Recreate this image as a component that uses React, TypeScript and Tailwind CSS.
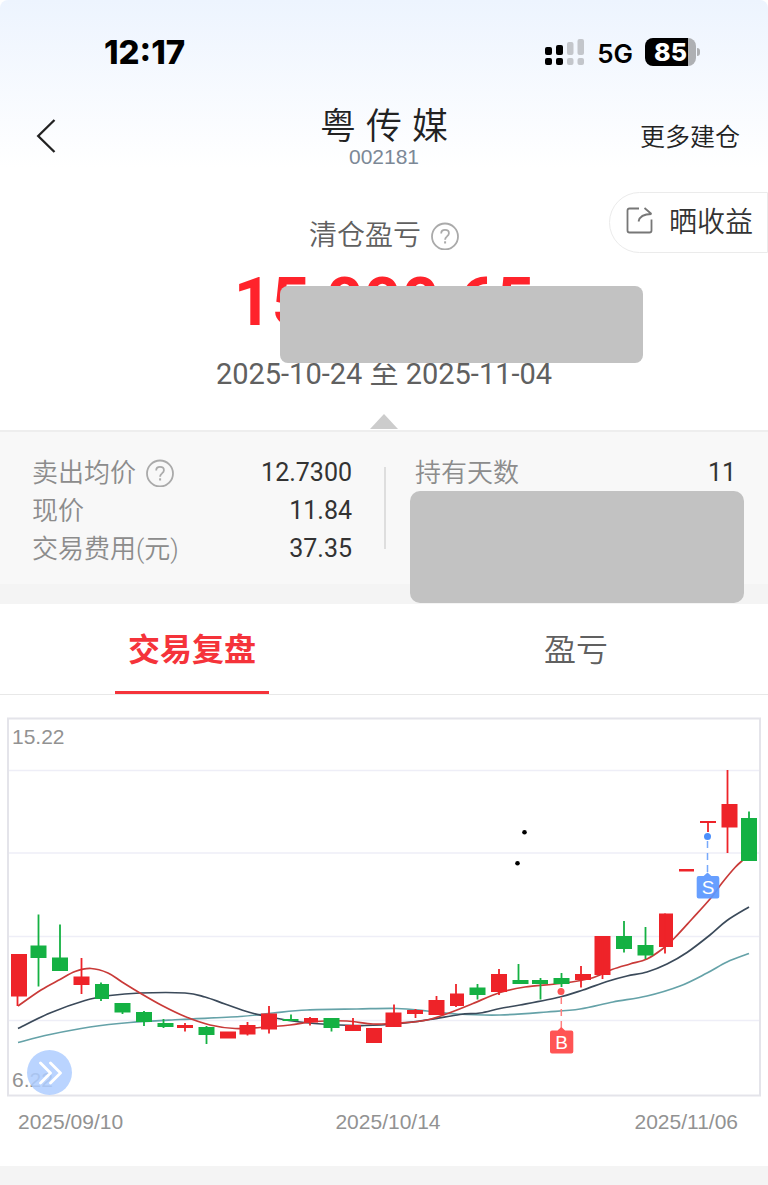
import { useState } from "react";

type Candle = {
  x: number;
  w?: number;
  top: number;
  bottom: number;
  wick?: [number, number, number];
  up: boolean;
};

const RED = "#ee2329";
const GREEN = "#14b143";

const candles: Candle[] = [
  { x: 11, top: 954, bottom: 996.5, wick: [17.5, 954, 1006], up: true },
  { x: 30.5, top: 945.5, bottom: 958, wick: [38.5, 914.5, 986.5], up: false },
  { x: 52, top: 957.5, bottom: 971, wick: [60, 924.5, 971], up: false },
  { x: 73.5, top: 976.5, bottom: 985, wick: [81.5, 958, 994], up: true },
  { x: 95, w: 14, top: 984, bottom: 999, wick: [101, 982.5, 1001], up: false },
  { x: 114.5, top: 1003, bottom: 1012.5, wick: [122.5, 1003, 1014], up: false },
  { x: 136, top: 1012, bottom: 1022, wick: [144, 1011, 1026], up: false },
  { x: 157.5, top: 1023, bottom: 1027, wick: [163.5, 1019, 1028], up: false },
  { x: 177, top: 1025, bottom: 1028, wick: [185, 1023, 1031.5], up: true },
  { x: 198.5, top: 1027, bottom: 1035, wick: [206.5, 1026, 1044], up: false },
  { x: 220, top: 1031.5, bottom: 1038.5, up: true },
  { x: 239.5, top: 1025, bottom: 1034.5, wick: [247.5, 1022, 1035.5], up: true },
  { x: 261, top: 1013.5, bottom: 1029.5, wick: [269, 1006, 1033.5], up: true },
  { x: 282.5, top: 1019, bottom: 1021, wick: [291, 1014.5, 1021], up: false },
  { x: 304, w: 14, top: 1018, bottom: 1022.5, wick: [310, 1017, 1025.5], up: true },
  { x: 323.5, top: 1018, bottom: 1028, wick: [331.5, 1018, 1031.5], up: false },
  { x: 345, top: 1025, bottom: 1031, wick: [353, 1018, 1031], up: true },
  { x: 366, top: 1028, bottom: 1043, up: true },
  { x: 385.5, top: 1012.5, bottom: 1027, wick: [394, 1004.5, 1027], up: true },
  { x: 407, top: 1010, bottom: 1014, wick: [415.5, 1009, 1018], up: true },
  { x: 428.5, top: 1000, bottom: 1015, wick: [436.5, 996, 1015], up: true },
  { x: 450, w: 14, top: 993.5, bottom: 1006, wick: [456, 984, 1007], up: true },
  { x: 469.5, top: 987.5, bottom: 995, wick: [477.5, 984, 999.5], up: false },
  { x: 491, top: 974, bottom: 992, wick: [499, 969, 995], up: true },
  { x: 512.5, top: 980, bottom: 984, wick: [518.5, 964, 984], up: false },
  { x: 532, top: 980, bottom: 984, wick: [540.5, 978, 999.5], up: false },
  { x: 553.5, top: 978, bottom: 984, wick: [561.5, 973, 987], up: false },
  { x: 575, top: 974, bottom: 980, wick: [581, 966, 987.5], up: true },
  { x: 594.5, top: 936, bottom: 975, wick: [602.5, 936, 979], up: true },
  { x: 616, top: 936, bottom: 949, wick: [624, 921, 952.5], up: false },
  { x: 637.5, top: 945, bottom: 955.5, wick: [645.5, 927, 959], up: false },
  { x: 659, w: 14, top: 913.5, bottom: 947, wick: [665, 913.5, 953.5], up: true },
  { x: 679, w: 15, top: 869, bottom: 871.5, up: true },
  { x: 700, top: 821, bottom: 823, wick: [708, 821, 832], up: true },
  { x: 721.5, top: 804, bottom: 827.5, wick: [727.5, 770, 853], up: true },
  { x: 741, top: 818, bottom: 861, wick: [749, 811.5, 861], up: false },
];

const ma5 = [
  [18, 1006], [41, 990], [60, 979.5], [75, 971.5], [91, 968.5], [108, 973],
  [122, 982], [140, 993], [162, 1005.5], [185, 1016.5], [210, 1025], [235, 1028.5],
  [260, 1027.5], [290, 1025], [315, 1021.5], [347, 1021], [373, 1024], [400, 1023],
  [427, 1020], [453, 1011.5], [473, 1003.5], [500, 992.5], [525, 987], [560, 983.5],
  [590, 978.5], [612, 969.5], [630, 964], [647, 959], [663, 948.5], [675, 937.5],
  [692, 919], [710, 899], [722, 883], [735, 867.5], [743, 860],
];
const ma10 = [
  [18, 1028.5], [50, 1013], [85, 1000.5], [110, 995.5], [140, 993], [185, 993],
  [205, 997], [225, 1004], [250, 1012.5], [275, 1018], [300, 1022], [330, 1024.5],
  [365, 1025.5], [400, 1023.5], [430, 1019.5], [460, 1014.5], [480, 1013], [500, 1008.5],
  [520, 1005], [560, 997], [583, 990], [607, 981.5], [627, 976], [647, 972],
  [667, 964], [687, 952.5], [710, 935], [727, 920.5], [749, 907],
];
const ma20 = [
  [18, 1042.5], [50, 1034.5], [90, 1027], [130, 1022.5], [180, 1019.5], [240, 1016.5],
  [273, 1013], [307, 1010], [357, 1009], [397, 1008.5], [427, 1011], [457, 1014],
  [500, 1015], [547, 1012], [580, 1009], [613, 1002], [647, 996], [680, 986],
  [707, 973], [727, 962], [749, 953.5],
];

// smooth curve through every point
function curve(p: number[][]) {
  let d = `M${p[0][0]} ${p[0][1]}`;
  for (let i = 0; i < p.length - 1; i++) {
    const a = p[i - 1] || p[i];
    const b = p[i];
    const c = p[i + 1];
    const e = p[i + 2] || c;
    d += `C${b[0] + (c[0] - a[0]) / 6} ${b[1] + (c[1] - a[1]) / 6} ${
      c[0] - (e[0] - b[0]) / 6
    } ${c[1] - (e[1] - b[1]) / 6} ${c[0]} ${c[1]}`;
  }
  return d;
}

const HelpButton = ({ label }: { label: string }) => (
  <button type="button" aria-label={label} className="shrink-0">
    <svg viewBox="0 0 28 28" className="size-7 text-[#aaaaaa]" fill="none" stroke="currentColor">
      <circle cx="14" cy="14.500" r="13" strokeWidth="1.8" />
      <path
        d="M10.200 11.400C10.200 9 11.800 7.900 14 7.900s3.900 1.300 3.900 3.300c0 1.600-1 2.400-2.100 3.400-1.100.9-1.700 1.500-1.700 3.200"
        strokeWidth="1.8"
      />
      <path d="M14.100 19.300v2.200" strokeWidth="2" />
    </svg>
  </button>
);

const StatusBar = () => (
  <div className="flex h-26 items-center justify-between pr-17 pl-26 text-black">
    <span className="pt-0.5 font-[Inter] text-[33px] font-extrabold">12:17</span>
    <div className="flex items-center gap-3">
      <svg viewBox="0 0 40 28" className="h-7 w-10">
        <g fill="#000">
          <rect x="0" y="9" width="7" height="8" rx="2" />
          <rect x="11" y="7" width="7" height="10" rx="2" />
          <rect x="0" y="20" width="7" height="7" rx="2" />
          <rect x="11" y="20" width="7" height="7" rx="2" />
        </g>
        <g fill="#c3c6cb">
          <rect x="22" y="4" width="6.5" height="13" rx="2" />
          <rect x="32.5" y="1" width="6.5" height="16" rx="2" />
          <rect x="22" y="20" width="6.5" height="7" rx="2" />
          <rect x="32.5" y="20" width="6.5" height="7" rx="2" />
        </g>
      </svg>
      <span className="pt-0.5 font-[Inter] text-[26px] font-semibold">5G</span>
      <div className="flex items-center gap-px">
        <div className="flex h-7 w-[51px] items-center justify-center rounded-lg bg-linear-to-r from-black from-85% to-[#aeb0b3] to-85% pt-0.5 font-[Inter] text-[25px] font-extrabold text-white">
          85
        </div>
        <div className="h-2 w-[3px] rounded-r-full bg-[#aeb0b3]" />
      </div>
    </div>
  </div>
);

const Chart = () => (
  <svg viewBox="0 710 768 390" className="block w-full">
    <g stroke="#eeeef7" strokeWidth="1.5">
      <path d="M8 770.5H760M8 853H760M8 936.5H760M8 1020.5H760" />
    </g>
    <rect x="8" y="718.5" width="752" height="377" fill="none" stroke="#e4e4ea" strokeWidth="2" />
    <g fill="#929292" fontFamily="Liberation Sans, sans-serif" fontSize="21" fontWeight="400">
      <text x="12" y="744">15.22</text>
      <text x="12" y="1087">6.22</text>
    </g>
    <g fill="none" strokeWidth="1.7">
      <path d={curve(ma20)} stroke="#65a2a8" />
      <path d={curve(ma10)} stroke="#3b4a5a" />
      <path d={curve(ma5)} stroke="#c93a38" />
    </g>
    {candles.map((c) => (
      <g key={c.x} fill={c.up ? RED : GREEN}>
        <rect x={c.x} y={c.top} width={c.w || 16} height={c.bottom - c.top} />
        {c.wick && (
          <rect x={c.wick[0] - 0.9} y={c.wick[1]} width="1.8" height={c.wick[2] - c.wick[1]} />
        )}
      </g>
    ))}
    <g fill="#000">
      <circle cx="524.5" cy="832.3" r="2.3" />
      <circle cx="517.5" cy="863.3" r="2.3" />
    </g>
    <g fill="#ff5454">
      <circle cx="561" cy="991.5" r="3.5" />
      <path d="M561.3 997V1028" stroke="#ff8080" strokeWidth="1.5" strokeDasharray="7 5" />
      <path d="M552 1030.5h5.5l3.8-3.5 3.8 3.5h6.2q2 0 2 2v19q0 2-2 2h-19.3q-2 0-2-2v-19q0-2 2-2z" />
      <text x="561.5" y="1049" fill="#fff" fontSize="19" textAnchor="middle" fontFamily="Liberation Sans, sans-serif">
        B
      </text>
    </g>
    <g fill="#4d90fb">
      <circle cx="707.5" cy="836.5" r="3.5" />
      <path d="M707.5 841V874" stroke="#77a9fb" strokeWidth="1.5" strokeDasharray="7 5" />
      <path
        d="M698.7 876h5l3.8-3.5 3.8 3.5h6q2 0 2 2v18.5q0 2-2 2h-18.6q-2 0-2-2v-18.5q0-2 2-2z"
        fill="#5b98ff"
        fillOpacity="0.93"
      />
      <text x="708" y="894" fill="#fff" fontSize="19" textAnchor="middle" fontFamily="Liberation Sans, sans-serif">
        S
      </text>
    </g>
  </svg>
);

const costs = [
  { label: "卖出均价", value: "12.7300", help: true },
  { label: "现价", value: "11.84" },
  { label: "交易费用(元)", value: "37.35" },
];

const tabs = ["交易复盘", "盈亏"];

const App = () => {
  const [active, setActive] = useState(0);

  return (
    <div className="bg-white font-['Roboto','Noto_Sans_CJK_SC',sans-serif] font-[350] text-[#222222]">
      <header className="rounded-t-lg bg-linear-to-b from-[#edf4fe] to-white">
        <StatusBar />
        <nav className="grid h-16 grid-cols-3 items-center">
          <button type="button" aria-label="返回" className="ml-9 justify-self-start">
            <svg viewBox="0 0 20 36" className="h-9 w-5" fill="none" stroke="#222" strokeWidth="2.3">
              <path d="M18.500 2L2.200 18l16.300 16" />
            </svg>
          </button>
          <div className="text-center">
            <h1 className="pt-1 text-4xl leading-[38px] font-[Liberation_Sans,'Noto_Sans_CJK_SC',sans-serif]">
              粤 传 媒
            </h1>
            <p className="font-['Liberation_Sans'] text-[21px] leading-[22px] text-[#7c8896]">002181</p>
          </div>
          <a href="#more" className="mr-7 justify-self-end pt-1 text-[25px]">
            更多建仓
          </a>
        </nav>
      </header>

      <section className="relative flex flex-col items-center pt-12 text-[#606060]">
        <button
          type="button"
          className="absolute top-6 right-0 flex h-[61px] items-center gap-4 rounded-l-full border border-[#ebebeb] bg-white pr-3.5 pl-4 text-[28px] text-[#333333]"
        >
          <svg viewBox="0 0 27 27" className="mb-1 size-[27px]" fill="none" stroke="#777" strokeWidth="1.8">
            <path d="M13 1.500H3.500Q1.500 1.500 1.500 3.500v20q0 2 2 2h20q2 0 2-2v-11" />
            <path d="M12.500 14.500Q14 7 25.500 7M18.500 1L25.500 7" />
          </svg>
          晒收益
        </button>
        <h2 className="flex items-center gap-2.5 text-[28px] leading-10">
          清仓盈亏
          <HelpButton label="清仓盈亏说明" />
        </h2>
        <p className="mt-2 text-[66px] leading-[78px] font-bold text-[#ff232b]">15,000.65</p>
        <p className="mt-3 text-[29px] leading-10 font-normal">2025-10-24 至 2025-11-04</p>
        <div className="absolute top-[118px] left-1/2 -ml-26 h-[77px] w-[363px] rounded-lg bg-[#c2c2c2]" />
        <svg viewBox="0 0 28 15" className="mt-5 mb-px h-[15px] w-7">
          <path d="M14 0l14 15H0z" fill="#cccccc" />
        </svg>
      </section>

      <section className="relative grid grid-cols-2 border-t-2 border-b-20 border-t-[#eeeeee] border-b-[#f4f4f4] bg-[#f8f8f8] pt-[22px] pb-4 text-[26px] leading-[38px]">
        <dl className="pr-8 pl-8">
          {costs.map((row) => (
            <div key={row.label} className="flex justify-between">
              <dt className="flex items-center gap-2.5 text-[#8c8c8c]">
                {row.label}
                {row.help && <HelpButton label="卖出均价说明" />}
              </dt>
              <dd className="text-[25px] font-normal text-[#333333]">{row.value}</dd>
            </div>
          ))}
        </dl>
        <dl className="pr-8 pl-[31px]">
          <div className="flex justify-between">
            <dt className="text-[#8c8c8c]">持有天数</dt>
            <dd className="text-[25px] font-normal text-[#333333]">11</dd>
          </div>
        </dl>
        <div className="absolute top-[35px] left-1/2 h-[82px] w-0.5 bg-[#dedede]" />
        <div className="absolute top-[59px] left-1/2 ml-[26px] h-28 w-[334px] rounded-[10px] bg-[#c2c2c2]" />
      </section>

      <div role="tablist" className="grid grid-cols-2 border-b border-[#e8e8e8]">
        {tabs.map((tab, i) => (
          <button
            key={tab}
            type="button"
            role="tab"
            aria-selected={active === i}
            onClick={() => setActive(i)}
            className={
              active === i
                ? "h-[90px] w-[154px] justify-self-center border-b-3 border-[#f5333a] pt-1 text-[32px] font-bold text-[#f5333a]"
                : "h-[90px] w-[154px] justify-self-center border-b-3 border-transparent pt-1 text-[32px] text-[#606060]"
            }
          >
            {tab}
          </button>
        ))}
      </div>

      <section className="border-b-20 border-[#f4f4f4] pt-[15px] pb-[26px]">
        <div className="relative">
          <Chart />
          <button
            type="button"
            aria-label="展开"
            className="absolute bottom-[5px] left-[27px] flex size-[45px] items-center justify-center rounded-full bg-[#aecdff]/85"
          >
            <svg viewBox="0 0 24 24" className="size-6" fill="none" stroke="#fff" strokeWidth="2.8" strokeLinecap="round" strokeLinejoin="round">
              <path d="M2.500 2l10 10-10 10M12.500 2l10 10-10 10" />
            </svg>
          </button>
        </div>
        <div className="grid grid-cols-3 pt-1 font-['Liberation_Sans'] text-[21px] leading-9 font-normal text-[#929292]">
          <span className="pl-[18px]">2025/09/10</span>
          <span className="pl-2 text-center">2025/10/14</span>
          <span className="pr-[30px] text-right">2025/11/06</span>
        </div>
      </section>
    </div>
  );
};

export default App;
